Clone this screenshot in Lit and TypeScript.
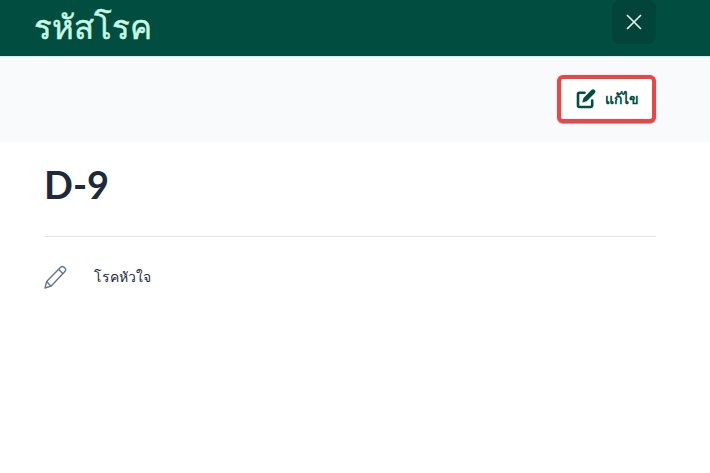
import { LitElement, html, css } from 'lit';
import { customElement } from 'lit/decorators.js';

@customElement('app-root')
export class AppRoot extends LitElement {
  static styles = css`
    :host {
      display: block;
      height: 473px;
      background: #fff;
      overflow: hidden;
      font-family: Lato, 'Noto Sans', 'Liberation Sans', sans-serif;
      color: #1e293b;
    }

    .header {
      height: 57px;
      box-sizing: border-box;
      padding: 0 54px 0 34px;
      display: flex;
      justify-content: space-between;
      align-items: flex-start;
      background: #014d40;
      border-bottom: 1px solid #e2e8f0;
    }

    .title {
      margin: 0;
      font-size: 33px;
      line-height: 53px;
      font-weight: 500;
      -webkit-text-stroke: 0.5px #c6f7e2;
      color: #c6f7e2;
    }

    .close {
      width: 44px;
      height: 44px;
      padding: 0;
      border: 0;
      border-radius: 8px;
      background: #03443a;
      display: flex;
      align-items: center;
      justify-content: center;
    }

    .toolbar {
      height: 85px;
      box-sizing: border-box;
      padding: 18px 54px 0 0;
      display: flex;
      justify-content: flex-end;
      align-items: flex-start;
      background: #f8fafc;
    }

    .edit {
      width: 99px;
      height: 48px;
      box-sizing: border-box;
      padding: 0 0 0 15px;
      display: flex;
      align-items: center;
      gap: 9px;
      background: #fff;
      border: 4px solid #ef4444;
      border-radius: 6px;
      box-shadow: 0 1px 1px rgba(0, 0, 0, 0.35);
      font-family: inherit;
      font-size: 14px;
      font-weight: 700;
      color: #014d40;
    }

    .content {
      padding: 20px 54px 0 44px;
    }

    .code {
      margin: 0;
      padding-bottom: 29px;
      font-size: 38px;
      line-height: 45px;
      font-weight: 700;
      border-bottom: 1px solid #e2e8f0;
    }

    .row {
      margin-top: 28px;
      display: flex;
      align-items: center;
      gap: 27px;
      font-size: 14px;
      font-weight: 500;
    }
  `;

  render() {
    return html`
      <div class="header">
        <h1 class="title">รหัสโรค</h1>
        <button class="close" aria-label="ปิด">
          <svg width="24" height="24" viewBox="0 0 24 24" fill="none" stroke="#e6f6f0" stroke-width="1.6">
            <path d="M5 5l14 14M19 5L5 19" />
          </svg>
        </button>
      </div>
      <div class="toolbar">
        <button class="edit">
          <svg width="20" height="20" viewBox="0 0 20 20" fill="none">
            <path d="M8.5 3.8H3.5A1.5 1.5 0 0 0 2 5.3v11.2A1.5 1.5 0 0 0 3.5 18h11.2a1.5 1.5 0 0 0 1.5-1.5V11.5" stroke="#014d40" stroke-width="2.6" stroke-linecap="round" />
            <path d="M15.4 1a2.2 2.2 0 0 1 3.3 3.2l-8 8-4.4 1.2 1.2-4.4z" fill="#014d40" />
          </svg>
          <span>แก้ไข</span>
        </button>
      </div>
      <div class="content">
        <h2 class="code">D-9</h2>
        <div class="row">
          <svg width="23" height="24" viewBox="0 0 23 24" fill="none" stroke="#64748b" stroke-width="1.4" stroke-linejoin="round">
            <path d="M1 23l1.6-6.4L16.6 2.2a2.4 2.4 0 0 1 3.4 0l.9.9a2.4 2.4 0 0 1 0 3.4L7 21.2z" />
            <path d="M14.6 4.3l4.3 4.4M2.6 16.6L7 21.2" />
          </svg>
          <span>โรคหัวใจ</span>
        </div>
      </div>
    `;
  }
}
